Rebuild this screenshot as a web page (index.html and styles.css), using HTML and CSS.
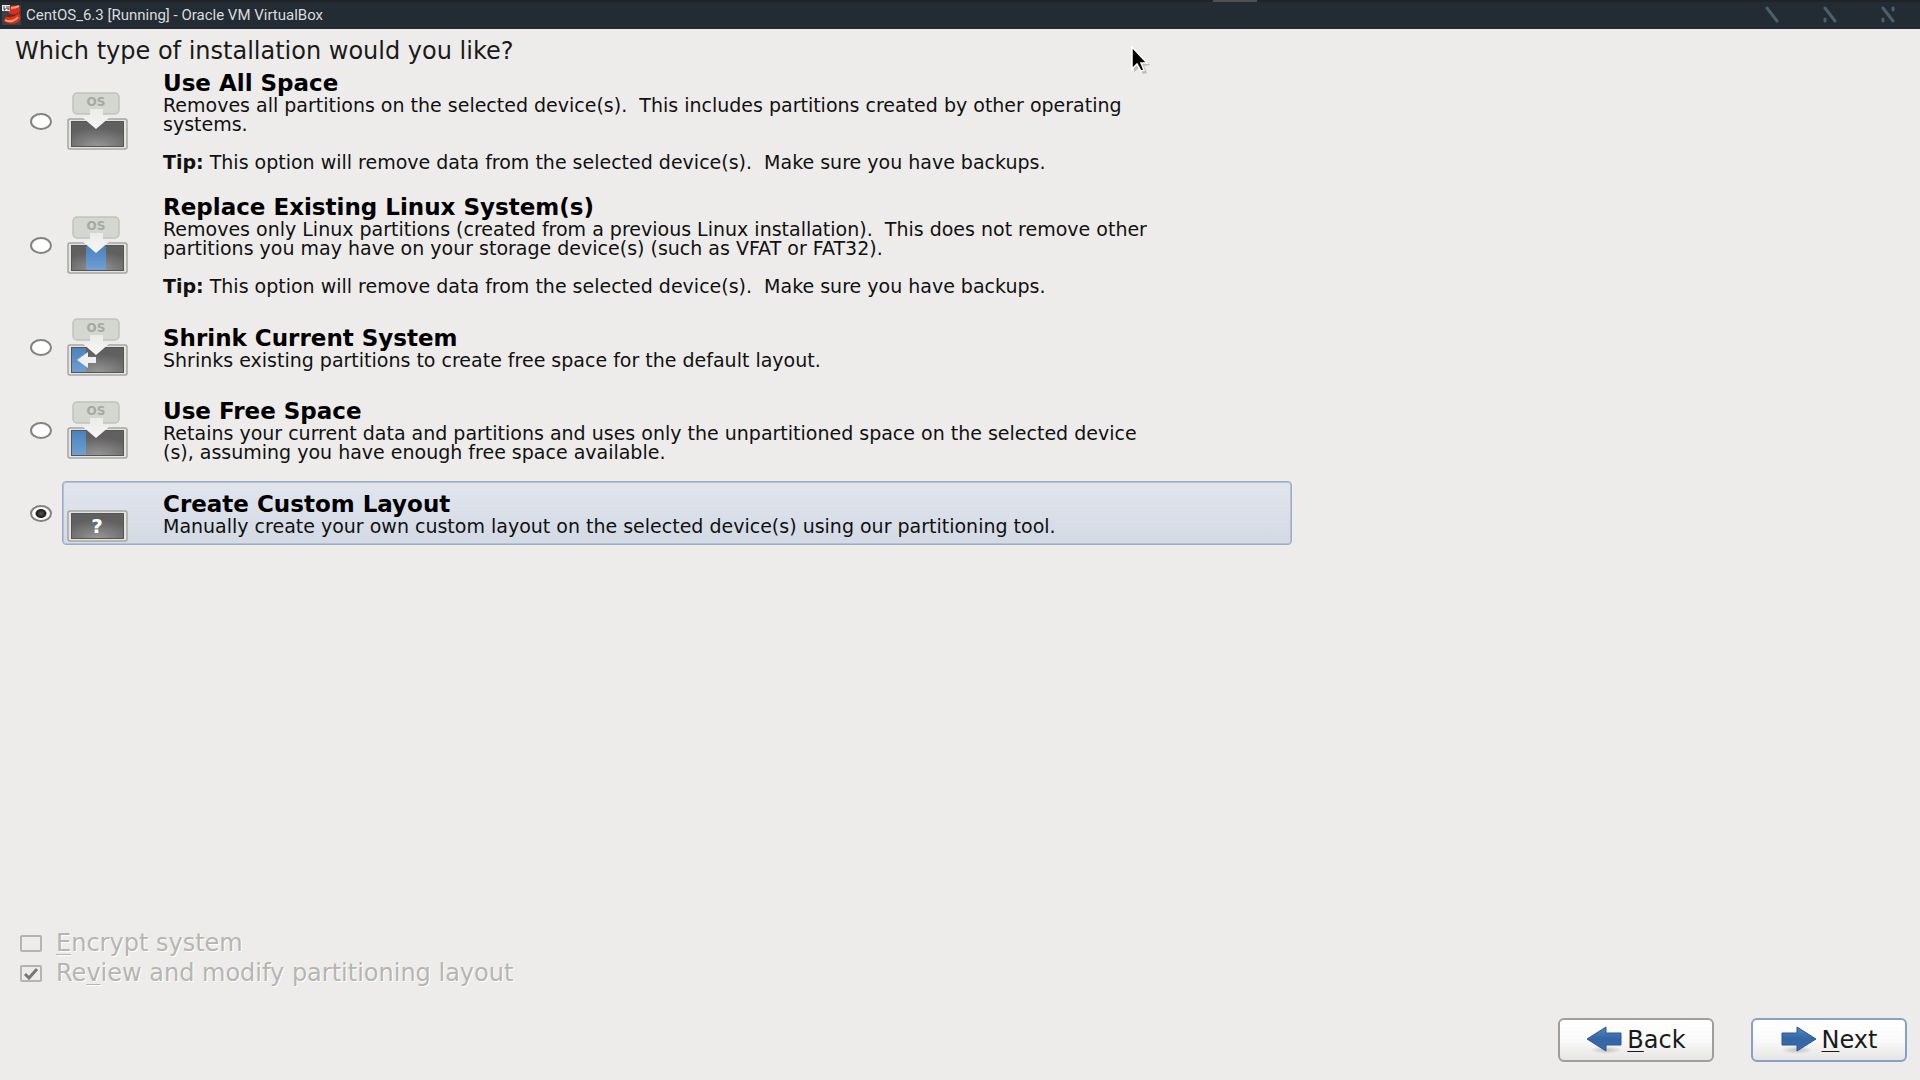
FILE: index.html
```
<!DOCTYPE html>
<html lang="en">
<head>
<meta charset="utf-8">
<title>CentOS_6.3 [Running] - Oracle VM VirtualBox</title>
<link rel="stylesheet" href="styles.css">
</head>
<body>
<svg class="defs" aria-hidden="true">
  <defs>
    <radialGradient id="disk" cx=".5" cy="1" r=".75"><stop offset="0" stop-color="#979797"/><stop offset="1" stop-color="#606060"/></radialGradient>
    <linearGradient id="blue" x2="0" y2="1"><stop offset="0" stop-color="#4a82be"/><stop offset="1" stop-color="#6f9fd4"/></linearGradient>
    <linearGradient id="arrow" x2="0" y2="1"><stop offset="0" stop-color="#5587bd"/><stop offset=".5" stop-color="#3465a4"/><stop offset="1" stop-color="#3b6dae"/></linearGradient>
    <radialGradient id="shade"><stop offset="0" stop-color="#000" stop-opacity=".2"/><stop offset="1" stop-color="#000" stop-opacity="0"/></radialGradient>
    <linearGradient id="fade" x2="0" y2="1"><stop offset="0" stop-color="#ecebe9"/><stop offset="1" stop-color="#f6f6f5"/></linearGradient>
    <g id="drive">
      <rect x="1" y="27" width="59" height="30" rx="2" fill="#e4e5e1" stroke="#a5a6a3" stroke-width="1.5"/>
      <rect x="4.500" y="29.500" width="52" height="25" fill="url(#disk)" stroke="#555"/>
    </g>
    <g id="system">
      <rect x="6" y="1" width="46" height="21" rx="4" fill="#d3d7cf" stroke="#c0c4bc" stroke-width="1.500"/>
      <text x="29" y="14" class="os">OS</text>
    </g>
    <path id="down" d="M23 17h13v8h7L29 37 15 25h8z" fill="url(#fade)"/>
  </defs>
</svg>
<header class="titlebar">
  <svg class="app-icon" viewBox="0 0 19 20" aria-hidden="true">
    <rect width="19" height="20" fill="#38404a"/>
    <path d="M9 1c5-1 9 0 9 3l-1 5c2 2 2 6-1 8-4 3-11 2-14-1l2-5c3 1 8 0 10-2-3 1-7 0-8-2z" fill="#db3118"/>
    <path d="M9 3c3 0 6-1 8-2M3 15c5 3 11 0 13-3" fill="none" stroke="#ff9b77" stroke-width="2"/>
    <path d="M4 11c4 1 9 0 12-3" fill="none" stroke="#761609"/>
    <rect width="8" height="6" fill="#eee"/><path d="M2 1v4h1V3M5 1v3h2M7 1v4" fill="none" stroke="#444"/>
  </svg>
  <h1 class="title">CentOS_6.3 [Running] - Oracle VM VirtualBox</h1>
  <span class="handle"></span>
  <div class="window-controls">
    <button type="button" aria-label="Minimize"><svg viewBox="0 0 14 17"><path d="M2 2l10 13"/></svg></button>
    <button type="button" aria-label="Maximize"><svg viewBox="0 0 14 17"><path d="M2 2l10 13M2 13v2"/></svg></button>
    <button type="button" aria-label="Close"><svg viewBox="0 0 14 17"><path d="M2 2l10 13M2 13v2M12 2v2"/></svg></button>
  </div>
</header>
<form class="installer">
  <fieldset class="options">
    <legend>Which type of installation would you like?</legend>
    <div class="option">
      <input type="radio" name="type" id="all">
      <label for="all">
        <svg class="art" viewBox="0 0 61 58" aria-hidden="true"><use href="#system"/><use href="#drive"/><use href="#down"/></svg>
        <span class="copy"><strong class="name">Use All Space</strong>Removes all partitions on the selected device(s).&nbsp; This includes partitions created by other operating<br>systems.<br><br><b>Tip:</b> This option will remove data from the selected device(s).&nbsp; Make sure you have backups.</span>
      </label>
    </div>
    <div class="option">
      <input type="radio" name="type" id="replace">
      <label for="replace">
        <svg class="art" viewBox="0 0 61 58" aria-hidden="true"><use href="#system"/><use href="#drive"/><rect x="19" y="30" width="20" height="24" fill="url(#blue)"/><use href="#down"/></svg>
        <span class="copy"><strong class="name">Replace Existing Linux System(s)</strong>Removes only Linux partitions (created from a previous Linux installation).&nbsp; This does not remove other<br>partitions you may have on your storage device(s) (such as VFAT or FAT32).<br><br><b>Tip:</b> This option will remove data from the selected device(s).&nbsp; Make sure you have backups.</span>
      </label>
    </div>
    <div class="option">
      <input type="radio" name="type" id="shrink">
      <label for="shrink">
        <svg class="art" viewBox="0 0 61 58" aria-hidden="true"><use href="#system"/><use href="#drive"/><rect x="5" y="30" width="14" height="24" fill="url(#blue)"/><use href="#down"/><path d="M10 42l11-8v5h8v6h-8v5z" fill="#eeeeec"/></svg>
        <span class="copy"><strong class="name">Shrink Current System</strong>Shrinks existing partitions to create free space for the default layout.</span>
      </label>
    </div>
    <div class="option">
      <input type="radio" name="type" id="free">
      <label for="free">
        <svg class="art" viewBox="0 0 61 58" aria-hidden="true"><use href="#system"/><use href="#drive"/><rect x="5" y="30" width="14" height="24" fill="url(#blue)"/><use href="#down"/></svg>
        <span class="copy"><strong class="name">Use Free Space</strong>Retains your current data and partitions and uses only the unpartitioned space on the selected device<br>(s), assuming you have enough free space available.</span>
      </label>
    </div>
    <div class="option">
      <input type="radio" name="type" id="custom" checked>
      <label for="custom">
        <svg class="art" viewBox="0 0 61 58" aria-hidden="true"><use href="#drive"/><text x="30" y="49" class="unknown">?</text></svg>
        <span class="copy"><strong class="name">Create Custom Layout</strong>Manually create your own custom layout on the selected device(s) using our partitioning tool.</span>
      </label>
    </div>
  </fieldset>
  <div class="checks">
    <div class="check"><input type="checkbox" id="encrypt" disabled><label for="encrypt"><u>E</u>ncrypt system</label></div>
    <div class="check"><input type="checkbox" id="review" checked disabled><label for="review">Re<u>v</u>iew and modify partitioning layout</label></div>
  </div>
  <div class="actions">
    <button type="button" class="nav"><svg viewBox="0 0 36 28" aria-hidden="true"><ellipse cx="20" cy="24" rx="16" ry="4" fill="url(#shade)"/><path d="M1 13L20 1v6h15v12H20v6z" fill="url(#arrow)" stroke="#2b5793"/></svg><span><u>B</u>ack</span></button>
    <button type="button" class="nav default"><svg viewBox="0 0 36 28" aria-hidden="true"><ellipse cx="16" cy="24" rx="16" ry="4" fill="url(#shade)"/><path d="M35 13L16 1v6H1v12h15v6z" fill="url(#arrow)" stroke="#2b5793"/></svg><span><u>N</u>ext</span></button>
  </div>
</form>
<svg class="pointer" viewBox="0 0 20 30" aria-hidden="true"><path d="M3 3v23l5-4 4 6 4-1-3-7 6-1z" fill="#888" opacity=".45"/><path d="M1 1v22l5-5 4 7 3-1-3-7h6z" fill="#000" stroke="#fff" stroke-width="1.500"/></svg>
</body>
</html>
```
FILE: styles.css
```
* { box-sizing: border-box; }

body {
  margin: 0;
  min-height: 100vh;
  display: flex;
  flex-direction: column;
  background: #edecea;
  color: #000;
  font: 24px/30px "DejaVu Sans", sans-serif;
}

.defs { position: absolute; width: 0; height: 0; }

.titlebar {
  position: relative;
  display: flex;
  align-items: center;
  gap: 5px;
  height: 29px;
  padding: 0 25px 2px 2px;
  border-top: 2px solid #212426;
  background: #232b33;
}
.app-icon { width: 19px; height: 20px; }
.title {
  margin: 0;
  color: #d8dcdf;
  font: 15px/20px Roboto, sans-serif;
}
.handle {
  position: absolute;
  top: -2px;
  left: 63.2%;
  width: 44px;
  height: 2px;
  background: #4e5052;
}
.window-controls { display: flex; gap: 44px; margin-left: auto; }
.window-controls button {
  display: flex;
  padding: 0;
  border: 0;
  background: none;
}
.window-controls svg {
  width: 14px;
  height: 17px;
  fill: none;
  stroke: #4b606d;
  stroke-width: 3;
  stroke-linecap: round;
}

.installer {
  flex: 1;
  display: flex;
  flex-direction: column;
  padding: 7px 13px 18px 15px;
}

.options {
  display: flex;
  flex-direction: column;
  gap: 16px;
  margin: 0;
  padding: 1px 0 0 15px;
  border: 0;
}
.options legend {
  margin-left: -15px;
  padding: 0;
  color: #1a1a1a;
}
.option {
  display: grid;
  grid-template-columns: 22px minmax(0, 1230px);
  gap: 10px;
  align-items: center;
}
.option label {
  display: flex;
  align-items: center;
  gap: 35px;
  padding: 2px 4px;
  border: 1px solid transparent;
  border-radius: 4px;
}
.option input:checked + label {
  border-color: #98adc8;
  background: linear-gradient(#e1e5ed, #d3dae4);
  box-shadow: inset 0 0 0 1px #b3c1d3;
}
.option input {
  appearance: none;
  width: 22px;
  height: 17px;
  margin: 0;
  border: 2px solid #858380;
  border-radius: 50%;
  background: #fff;
}
.option input:checked {
  background: radial-gradient(ellipse 6px 5px, #555 0, #1c1c1c 80%, #fff 100%);
}
.art { flex: none; width: 61px; height: 58px; }
.os {
  fill: #a5a9a1;
  font: bold 12px "DejaVu Sans", sans-serif;
  text-anchor: middle;
}
.unknown {
  fill: #fff;
  font: bold 20px "DejaVu Sans", sans-serif;
  text-anchor: middle;
}
.copy { font-size: 19px; line-height: 19px; color: #111; }
.name {
  display: block;
  color: #000;
  font-size: 23px;
  line-height: 26px;
}

u { text-underline-offset: 3px; text-decoration-thickness: 1px; }

.checks { margin-top: auto; padding-left: 5px; }
.check {
  display: flex;
  align-items: center;
  gap: 14px;
  color: #b6b5b2;
  text-shadow: 1px 1px 0 #fff;
}
.check input {
  appearance: none;
  width: 22px;
  height: 17px;
  margin: 0;
  border: 2px solid #b5b4b2;
  border-radius: 2px;
}
.check input:checked {
  background: url("data:image/svg+xml,%3Csvg xmlns='http://www.w3.org/2000/svg' viewBox='0 0 18 13'%3E%3Cpath d='M3 7l4 4 8-9' fill='none' stroke='%23777' stroke-width='3'/%3E%3C/svg%3E") center / 100% 100%;
}

.actions {
  display: flex;
  justify-content: flex-end;
  gap: 37px;
  margin-top: 30px;
}
.nav {
  display: flex;
  align-items: center;
  justify-content: center;
  gap: 5px;
  width: 156px;
  height: 44px;
  padding: 0;
  border: 2px solid #a09e9b;
  border-radius: 6px;
  background: linear-gradient(#fff, #fafafa 50%, #e6e5e4);
  color: #1a1a1a;
  font: inherit;
}
.nav svg { width: 36px; height: 28px; }
.default { border-color: #84a1c9; }

.pointer {
  position: absolute;
  top: 46px;
  left: 1131px;
  width: 20px;
  height: 30px;
}
```
